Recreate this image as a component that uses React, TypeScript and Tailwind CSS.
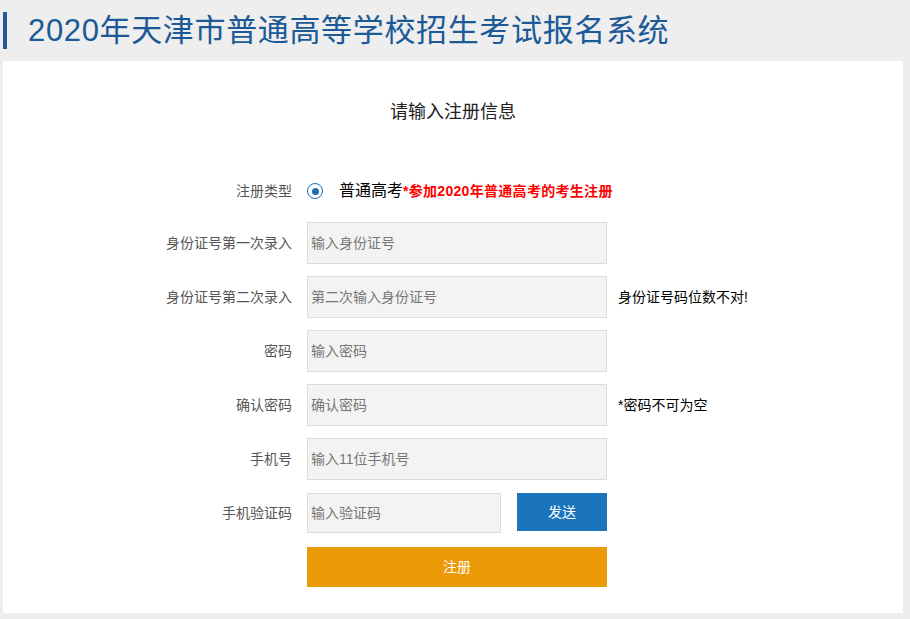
import { useState } from "react";

const FONT = "font-['Liberation_Sans','Noto_Sans_CJK_SC',sans-serif]";

type Field = { label: string; placeholder: string; type?: string; tip?: string };

const FIELDS: Field[] = [
  { label: "身份证号第一次录入", placeholder: "输入身份证号" },
  { label: "身份证号第二次录入", placeholder: "第二次输入身份证号", tip: "身份证号码位数不对!" },
  { label: "密码", placeholder: "输入密码", type: "password" },
  { label: "确认密码", placeholder: "确认密码", type: "password", tip: "*密码不可为空" },
  { label: "手机号", placeholder: "输入11位手机号" },
];

export default function App() {
  const [kind] = useState("普通高考");

  return (
    <div className={`min-h-screen bg-[#eeeeee] ${FONT}`}>
      {/* Header */}
      <header className="flex items-center h-[61px] pl-[3px]">
        <div className="w-[4px] h-[37px] bg-[#1b5a96]" />
        <h1 className="ml-[21px] text-[31px] leading-none text-[#1b5a96] tracking-[0.65px]">
          2020年天津市普通高等学校招生考试报名系统
        </h1>
      </header>

      {/* Form panel */}
      <div className="ml-[3px] w-[900px] h-[552px] bg-white pt-[38px]">
        <h2 className="text-center text-[18px] leading-[26px] text-[#222]">请输入注册信息</h2>

        {/* Register type */}
        <div className="flex items-center h-[30px] mt-[51px]">
          <span className="w-[289px] text-right text-[14px] text-[#555]">注册类型</span>
          <span className="ml-[15px] w-[16px] h-[16px] rounded-full border-[1.5px] border-[#1b6fb5] flex items-center justify-center">
            <span className="w-[7px] h-[7px] rounded-full bg-[#1b6fb5]" />
          </span>
          <span className="ml-[16px] text-[16px] text-black">{kind}</span>
          <span className="text-[14px] font-bold text-[#ff0000] tracking-[0.3px]">*参加2020年普通高考的考生注册</span>
        </div>

        {/* Text fields */}
        <div className="flex flex-col gap-[12px] mt-[16px]">
          {FIELDS.map((f) => (
            <div key={f.label} className="flex items-center">
              <span className="w-[289px] text-right text-[14px] text-[#555]">{f.label}</span>
              <input
                type={f.type ?? "text"}
                placeholder={f.placeholder}
                className="ml-[15px] w-[300px] h-[42px] bg-[#f3f3f3] border border-[#dddddd] px-[3px] text-[14px] placeholder:text-[#777] outline-none"
              />
              {f.tip && <span className="ml-[11px] text-[14px] text-black">{f.tip}</span>}
            </div>
          ))}
        </div>

        {/* Verification code */}
        <div className="flex items-center mt-[13px]">
          <span className="w-[289px] text-right text-[14px] text-[#555]">手机验证码</span>
          <input
            placeholder="输入验证码"
            className="ml-[15px] w-[194px] h-[40px] bg-[#f3f3f3] border border-[#dddddd] px-[3px] text-[14px] placeholder:text-[#777] outline-none"
          />
          <button className="ml-[16px] w-[90px] h-[38px] self-start bg-[#1b75bc] text-white text-[14px]">发送</button>
        </div>

        <button className="mt-[14px] ml-[304px] w-[300px] h-[40px] bg-[#eb9a07] text-white text-[14px]">注册</button>
      </div>
    </div>
  );
}
